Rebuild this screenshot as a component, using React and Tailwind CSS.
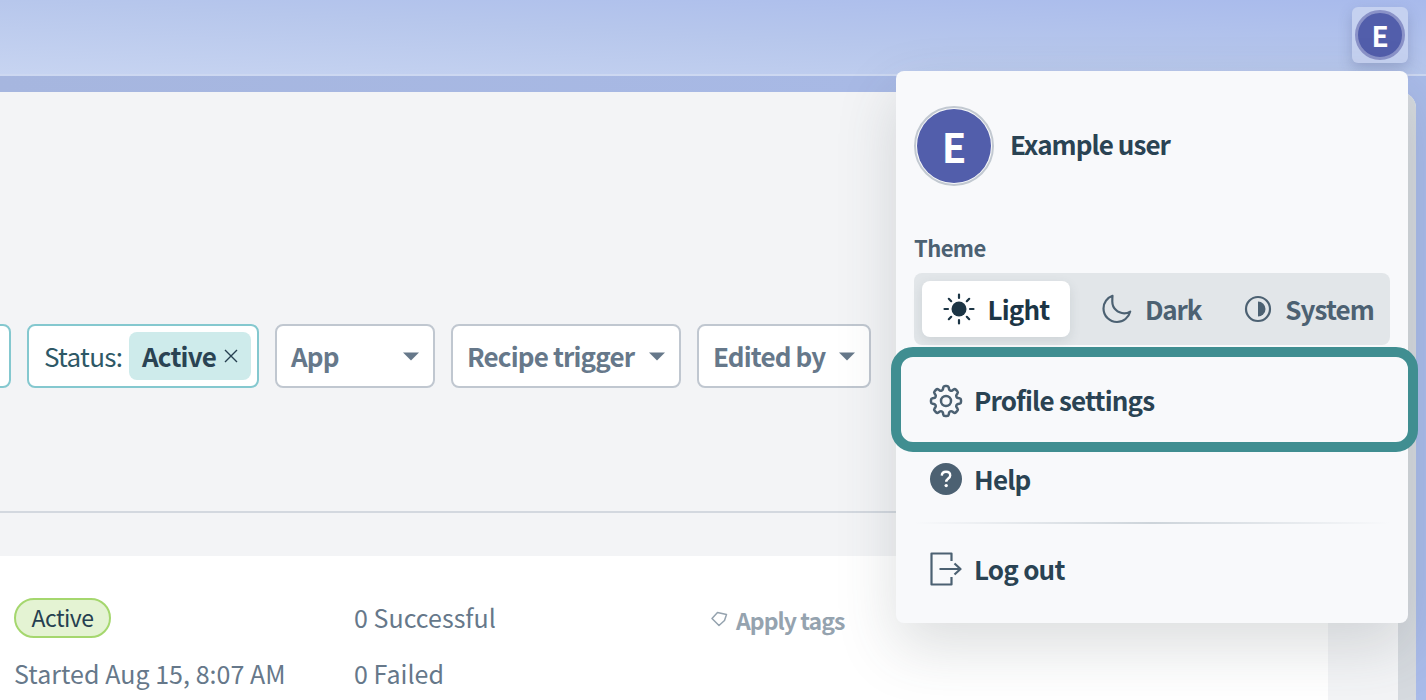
import React from "react";
import { HiOutlineCog8Tooth } from "react-icons/hi2";

function Caret() {
  return (
    <svg width="16" height="9" viewBox="0 0 16 9">
      <path d="M0 0.5H16L8 8.5Z" fill="#66788a" />
    </svg>
  );
}

function Filter({ label, width }) {
  return (
    <div className={`flex h-[64px] items-center justify-between rounded-[8px] border-2 border-[#c0c7d0] bg-white pl-[14px] pr-[14px] ${width}`}>
      <span className="pb-[2px] text-[26px] font-semibold tracking-[-0.85px] text-[#66788a]">{label}</span>
      <Caret />
    </div>
  );
}

function Sun() {
  return (
    <svg width="32" height="32" viewBox="0 0 32 32" fill="none" stroke="#1c3545" strokeWidth="2.2" strokeLinecap="round">
      <circle cx="16" cy="16" r="7.5" fill="#1c3545" stroke="none" />
      <path d="M16 1.5v3.5M16 27v3.5M1.5 16H5M27 16h3.5M5.8 5.8l2.4 2.4M23.8 23.8l2.4 2.4M5.8 26.2l2.4-2.4M23.8 8.2l2.4-2.4" />
    </svg>
  );
}

function Moon() {
  return (
    <svg width="30" height="30" viewBox="0 0 30 30" fill="none" stroke="#4c6172" strokeWidth="2.2" strokeLinejoin="round">
      <path d="M10.5 1.8C5.2 3.7 1.5 8.7 1.5 14.5C1.5 22 7.5 28 15 28C21.4 28 26.8 23.5 28.2 17.6C26.4 18.7 24.4 19.3 22.2 19.3C15.6 19.3 10.3 14 10.3 7.4C10.3 5.4 10.3 3.5 10.5 1.8Z" />
    </svg>
  );
}

function SystemIcon() {
  return (
    <svg width="28" height="28" viewBox="0 0 28 28" fill="none">
      <circle cx="14" cy="14" r="12" stroke="#4c6172" strokeWidth="2.2" />
      <path d="M14 6.5A7.5 7.5 0 0 1 14 21.5Z" fill="#4c6172" />
    </svg>
  );
}

function HelpIcon() {
  return (
    <svg width="32" height="32" viewBox="0 0 32 32">
      <circle cx="16" cy="16" r="16" fill="#4c6172" />
      <path d="M11.8 12.6C11.9 10.2 13.7 8.8 16 8.8C18.4 8.8 20.2 10.2 20.2 12.4C20.2 15.4 16.2 15.6 16.2 18.8" fill="none" stroke="#fff" strokeWidth="2.4" />
      <circle cx="16.2" cy="22.6" r="1.7" fill="#fff" />
    </svg>
  );
}

function LogoutIcon() {
  return (
    <svg width="32" height="34" viewBox="0 0 32 34" fill="none" stroke="#4c6172" strokeWidth="2.2" strokeLinejoin="round">
      <path d="M21.5 9V1.5H1.5V32.5H21.5V25" />
      <path d="M9.5 17H30M24.5 11.5L30.5 17L24.5 22.5" />
    </svg>
  );
}

function Row({ icon, label, labelClass = "" }) {
  return (
    <div className="flex items-center gap-[12px]">
      <span className="flex w-[32px] justify-center">{icon}</span>
      <span className={`text-[26px] font-semibold leading-[36px] tracking-[-0.8px] text-[#2a4353] ${labelClass}`}>{label}</span>
    </div>
  );
}

export default function App() {
  return (
    <div
      className="relative flex h-[700px] w-[1426px] flex-col overflow-hidden bg-gradient-to-r from-[#a6b6df] to-[#a9bbe9]"
      style={{ fontFamily: '"Noto Sans CJK SC", "Open Sans", sans-serif' }}
    >
      <header className="h-[76px] shrink-0 border-b-2 border-[#cdd8f1] bg-[linear-gradient(to_top_right,#c7d4f1,#b7c7ec_50%,#a8baec)]" />
      <div className="mt-[16px] mr-[10px] flex min-h-0 flex-1 rounded-tr-[16px] bg-[#f3f4f6]">
        <main className="flex min-w-0 flex-1 flex-col">
          <div className="flex-1">
            <div className="flex h-[421px] items-start border-b-2 border-[#d3d8df]">
              <div className="mt-[232px] flex gap-[16px]">
                <div className="-ml-[10px] h-[64px] w-[21px] rounded-[8px] border-2 border-[#84c8cf] bg-white" />
                <div className="flex h-[64px] w-[232px] items-center rounded-[8px] border-2 border-[#84c8cf] bg-white pl-[15px]">
                  <span className="w-[85px] pb-[2px] text-[26px] tracking-[-0.7px] text-[#2e5866]">Status:</span>
                  <span className="flex h-[48px] w-[122px] items-center rounded-[8px] bg-[#ceebeb] pl-[13px]">
                    <span className="w-[76px] pb-[2px] text-[26px] font-semibold tracking-[-0.8px] text-[#2a4353]">Active</span>
                    <svg width="14" height="14" viewBox="0 0 14 14" className="ml-[6px]" stroke="#263f50" strokeWidth="1.4">
                      <path d="M1 1L13 13M13 1L1 13" />
                    </svg>
                  </span>
                </div>
                <Filter label="App" width="w-[160px]" />
                <Filter label="Recipe trigger" width="w-[230px]" />
                <Filter label="Edited by" width="w-[174px]" />
              </div>
            </div>
            <div className="h-[43px]" />
          </div>
          <div className="flex h-[144px] shrink-0 bg-white pl-[14px] pt-[42px]">
            <div className="w-[340px]">
              <div className="flex h-[40px] w-[97px] items-center justify-center rounded-full border-2 border-[#a5d76e] bg-[#e4f3d3]">
                <span className="pb-[2px] text-[23px] tracking-[-0.55px] text-[#263f50]">Active</span>
              </div>
              <div className="mt-[17px] text-[25px] leading-[36px] tracking-[0.04px] text-[#66788a]">Started Aug 15, 8:07 AM</div>
            </div>
            <div className="w-[357px] text-[25px] tracking-[0.03px] text-[#66788a]">
              <div className="pb-[2px] leading-[38px]">0 Successful</div>
              <div className="mt-[17px] leading-[36px]">0 Failed</div>
            </div>
            <div className="flex h-[40px] items-center gap-[8px]">
              <svg width="17" height="17" viewBox="0 0 17 17" fill="none" stroke="#95a3af" strokeWidth="1.5" strokeLinejoin="round">
                <path d="M1 8.5L6.5 2.5L15.5 4.5L13.5 10.5L8 15.5Z" />
              </svg>
              <span className="pt-[4px] text-[23px] font-semibold tracking-[-0.95px] text-[#95a3af]">Apply tags</span>
            </div>
          </div>
        </main>
        <div className="w-[70px] shrink-0 bg-[#f3f4f6]" />
        <div className="w-[18px] shrink-0 rounded-tr-[16px] bg-[#d6dadf]" />
      </div>

      <div className="absolute left-[1352px] top-[7px] flex h-[56px] w-[56px] items-center justify-center rounded-[6px] bg-[#c5d1f0] shadow-[0_6px_14px_rgba(60,70,120,0.25)]">
        <div className="flex h-[50px] w-[50px] items-center justify-center rounded-full border-[3px] border-[#8a92c8] bg-[#525eab]">
          <span className="text-[28px] font-semibold leading-none text-white">E</span>
        </div>
      </div>

      <div className="absolute left-[896px] top-[71px] h-[552px] w-[512px] rounded-[8px] bg-[#f8f9fb] shadow-[0_24px_60px_rgba(60,70,80,0.18)]">
        <div className="ml-[18px] mt-[35px] flex items-center gap-[16px]">
          <div className="flex h-[80px] w-[80px] items-center justify-center rounded-full border-2 border-[#c2c9d1] p-[1px]">
            <div className="flex h-full w-full items-center justify-center rounded-full bg-[#525eab]">
              <span className="text-[40px] font-semibold leading-none text-white">E</span>
            </div>
          </div>
          <span className="pb-[6px] text-[26px] font-semibold tracking-[-0.95px] text-[#2a4353]">Example user</span>
        </div>
        <div className="ml-[18px] mt-[46px] text-[22px] font-semibold leading-[30px] tracking-[-0.6px] text-[#4c6172]">Theme</div>
        <div className="ml-[18px] mt-[11px] flex h-[72px] w-[476px] items-center rounded-[8px] bg-[#e2e6e9] pl-[8px]">
          <div className="flex h-[56px] w-[148px] items-center justify-center gap-[13px] rounded-[8px] bg-white shadow-[0_4px_12px_rgba(60,70,80,0.12)]">
            <Sun />
            <span className="pb-[2px] text-[26px] font-semibold tracking-[-0.85px] text-[#1c3545]">Light</span>
          </div>
          <div className="ml-[32px] flex items-center gap-[13px]">
            <Moon />
            <span className="pb-[2px] text-[26px] font-semibold tracking-[-1.2px] text-[#4c6172]">Dark</span>
          </div>
          <div className="ml-[43px] flex items-center gap-[13px]">
            <SystemIcon />
            <span className="pb-[2px] text-[26px] font-semibold tracking-[-0.9px] text-[#4c6172]">System</span>
          </div>
        </div>
        <div className="ml-[34px] mt-[36px]">
          <Row icon={<HiOutlineCog8Tooth size={40} color="#4c6172" className="shrink-0" />} label="Profile settings" labelClass="pb-[2px]" />
        </div>
        <div className="ml-[34px] mt-[40px]">
          <Row icon={<HelpIcon />} label="Help" />
        </div>
        <div className="ml-[18px] mt-[25px] h-[2px] w-[476px] bg-gradient-to-r from-transparent via-[#cdd4da] to-transparent" />
        <div className="ml-[34px] mt-[27px]">
          <Row icon={<LogoutIcon />} label="Log out" />
        </div>
        <div className="absolute left-[-5px] top-[276px] h-[105px] w-[527px] rounded-[22px] border-[10px] border-[#408e91]" />
      </div>
    </div>
  );
}
